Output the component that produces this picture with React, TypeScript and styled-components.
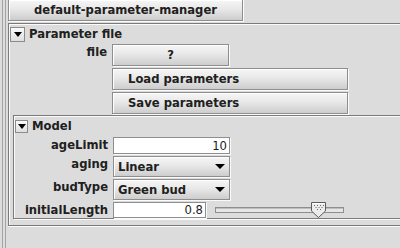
import { createGlobalStyle, styled } from "styled-components";

const Global = createGlobalStyle`
  html, body { margin: 0; padding: 0; background: #dcdcdc; }
`;

const Frame = styled.div`
  width: 400px;
  height: 248px;
  display: flex;
  overflow: hidden;
  background: #dcdcdc;
  font-family: "DejaVu Sans", "Liberation Sans", sans-serif;
  font-size: 11.6px;
  font-weight: bold;
  color: #202020;
`;

const Gutter = styled.div`
  flex: none;
  margin-left: 2px;
  width: 2px;
  border-left: 1px solid #a4a4a4;
  border-right: 1px solid #a4a4a4;
`;

const Main = styled.div`
  flex: 1;
  margin-left: 2px;
  display: flex;
  flex-direction: column;
  min-width: 0;
`;

const TopBar = styled.div`
  height: 23px;
  flex: none;
`;

const Button = styled.button<{ $w: number; $align?: "left" | "center" }>`
  box-sizing: border-box;
  width: ${(p) => p.$w}px;
  height: 22px;
  margin: 0;
  padding: 0 ${(p) => (p.$align === "left" ? "0 0 15px" : "0")};
  display: flex;
  align-items: center;
  justify-content: ${(p) => (p.$align === "left" ? "flex-start" : "center")};
  border: 1px solid #8e8e8e;
  border-radius: 0;
  background: linear-gradient(#f6f6f6, #e8e8e8 45%, #cdcdcd);
  box-shadow: inset 1px 1px 0 #fff, 1px 1px 0 #fbfbfb;
  font: inherit;
  color: #202020;
`;

const TopButton = styled(Button)`
  margin-top: -1px;
`;

const Body = styled.div`
  flex: none;
  height: 199px;
  border-top: 1px solid #7a7a7a;
  border-left: 1px solid #7a7a7a;
  border-bottom: 1px solid #7a7a7a;
  box-shadow: inset 1px 1px 0 #fafafa, 0 1px 0 #fafafa;
  padding: 2px 0 0 1px;
  display: flex;
  flex-direction: column;
`;

const Header = styled.div`
  display: flex;
  align-items: center;
  gap: 4px;
  height: 16px;
`;

const Toggle = styled.div<{ $size: number }>`
  box-sizing: border-box;
  width: ${(p) => p.$size}px;
  height: ${(p) => p.$size}px;
  border: 1px solid #8b8b8b;
  background: linear-gradient(#fafafa, #dedede);
  display: flex;
  align-items: center;
  justify-content: center;
  &::after {
    content: "";
    border-left: 4px solid transparent;
    border-right: 4px solid transparent;
    border-top: 5px solid #000;
  }
`;

const Rows = styled.div<{ $top: number }>`
  display: flex;
  flex-direction: column;
  gap: 2px;
  margin-top: ${(p) => p.$top}px;
`;

const Row = styled.div`
  display: flex;
  align-items: flex-start;
`;

const Label = styled.div<{ $w: number }>`
  width: ${(p) => p.$w}px;
  flex: none;
  text-align: right;
  margin-right: 5px;
  padding-top: 1px;
  line-height: 14px;
  white-space: nowrap;
`;

const Spacer = styled.div<{ $w: number }>`
  width: ${(p) => p.$w}px;
  flex: none;
`;

const ModelBox = styled.div`
  margin: 1px -20px 0 3px;
  height: 100px;
  border: 1px solid #7a7a7a;
  box-shadow: inset 1px 1px 0 #fafafa, 1px 1px 0 #fafafa;
  padding: 2px 0 0 1px;
`;

const Field = styled.div<{ $w: number; $h: number }>`
  box-sizing: border-box;
  width: ${(p) => p.$w}px;
  height: ${(p) => p.$h}px;
  background: #fff;
  border: 1px solid #8e8e8e;
  box-shadow: 1px 1px 0 #fafafa;
  display: flex;
  align-items: center;
  justify-content: flex-end;
  padding-right: 2px;
  font-weight: normal;
  color: #1a1a1a;
`;

const Combo = styled.div`
  box-sizing: border-box;
  width: 117px;
  height: 21px;
  display: flex;
  align-items: center;
  border: 1px solid #8e8e8e;
  background: linear-gradient(#f6f6f6, #e8e8e8 45%, #cdcdcd);
  box-shadow: inset 1px 1px 0 #fff, 1px 1px 0 #fafafa;
  padding-left: 4px;
`;

const ComboText = styled.span`
  flex: 1;
`;

const Arrow = styled.div`
  width: 18px;
  height: 100%;
  display: flex;
  align-items: center;
  justify-content: center;
  &::after {
    content: "";
    border-left: 5px solid transparent;
    border-right: 5px solid transparent;
    border-top: 5px solid #000;
  }
`;

const Track = styled.div`
  position: relative;
  box-sizing: border-box;
  width: 129px;
  height: 6px;
  margin: 5px 0 0 9px;
  border: 1px solid #8e8e8e;
  background: #e6e6e6;
  box-shadow: inset 0 1px 0 #bdbdbd;
`;

const Thumb = styled.svg`
  position: absolute;
  top: -6px;
`;

function Slider({ value }: { value: number }) {
  const width = 129;
  const left = Math.round(value * width - 7) - 1;
  return (
    <Track>
      <Thumb width="15" height="16" viewBox="0 0 15 16" style={{ left }}>
        <path d="M0.5 0.5 H14.5 V9 L7.5 15.5 L0.5 9 Z" fill="#ececec" stroke="#5c5c5c" />
        <path d="M1.5 1.5 H13.5" stroke="#fff" />
        {[3, 6, 9, 12].map((x) => (
          <rect key={"a" + x} x={x} y={3} width={1} height={1} fill="#6a6a6a" />
        ))}
        {[4.5, 7.5, 10.5].map((x) => (
          <rect key={"b" + x} x={x} y={5} width={1} height={1} fill="#6a6a6a" />
        ))}
        {[6, 9].map((x) => (
          <rect key={"c" + x} x={x} y={7} width={1} height={1} fill="#6a6a6a" />
        ))}
      </Thumb>
    </Track>
  );
}

export default function App() {
  return (
    <>
      <Global />
      <Frame>
        <Gutter />
        <Main>
          <TopBar>
            <TopButton $w={235}>default-parameter-manager</TopButton>
          </TopBar>
          <Body>
            <Header>
              <Toggle $size={15} />
              <span>Parameter file</span>
            </Header>
            <Rows $top={2}>
              <Row>
                <Label $w={97}>file</Label>
                <Button $w={117}>?</Button>
              </Row>
              <Row>
                <Spacer $w={102} />
                <Button $w={236} $align="left">Load parameters</Button>
              </Row>
              <Row>
                <Spacer $w={102} />
                <Button $w={236} $align="left">Save parameters</Button>
              </Row>
            </Rows>
            <ModelBox>
              <Header>
                <Toggle $size={13} />
                <span>Model</span>
              </Header>
              <Rows $top={3}>
                <Row>
                  <Label $w={93}>ageLimit</Label>
                  <Field $w={117} $h={17}>10</Field>
                </Row>
                <Row>
                  <Label $w={93}>aging</Label>
                  <Combo>
                    <ComboText>Linear</ComboText>
                    <Arrow />
                  </Combo>
                </Row>
                <Row>
                  <Label $w={93}>budType</Label>
                  <Combo>
                    <ComboText>Green bud</ComboText>
                    <Arrow />
                  </Combo>
                </Row>
                <Row>
                  <Label $w={93}>initialLength</Label>
                  <Field $w={93} $h={16}>0.8</Field>
                  <Slider value={0.8} />
                </Row>
              </Rows>
            </ModelBox>
          </Body>
        </Main>
      </Frame>
    </>
  );
}
